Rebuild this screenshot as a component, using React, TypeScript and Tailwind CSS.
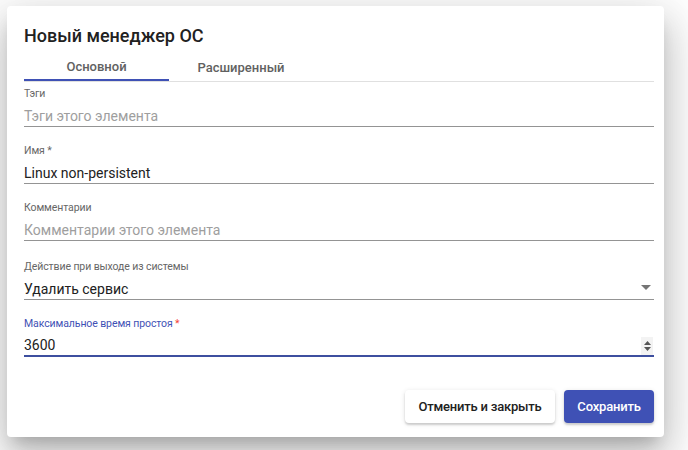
import React from "react";

const font = { fontFamily: "Roboto, 'Noto Sans', sans-serif" };

interface FieldProps {
    label: string;
    required?: boolean;
    value?: string;
    placeholder?: string;
    focused?: boolean;
    suffix?: React.ReactNode;
    className?: string;
}

const Field = ({ label, required, value, placeholder, focused, suffix, className }: FieldProps) => {
    return (
        <div className={`flex flex-col ${className ?? "pt-[17px]"}`}>
            <div
                className={`text-[10.5px] leading-[14px] tracking-[-0.1px] ${
                    focused ? "text-[#3f51b5]" : "text-[#666666]"
                }`}
            >
                {label}
                {required && <span className={focused ? "text-[#f44336]" : ""}> *</span>}
            </div>
            <div
                className={`flex items-end h-[26px] ${
                    focused ? "border-b-2 border-[#3d4f9f]" : "border-b border-[#949494]"
                }`}
            >
                <div
                    className={`flex-1 text-[14px] leading-[20px] ${
                        value ? "text-[#212121]" : "text-[#9e9e9e]"
                    }`}
                >
                    {value ?? placeholder}
                </div>
                {suffix}
            </div>
        </div>
    );
};

const Spinner = () => (
    <div className="flex flex-col items-center justify-center w-[12px] h-[18px] bg-[#f3f3f3] mr-[1px] gap-[2px]">
        <svg width="7" height="4" viewBox="0 0 7 4"><path d="M0 4 L3.5 0 L7 4 Z" fill="#555" /></svg>
        <svg width="7" height="4" viewBox="0 0 7 4"><path d="M0 0 L3.5 4 L7 0 Z" fill="#555" /></svg>
    </div>
);

const Arrow = () => (
    <svg width="10" height="5" viewBox="0 0 10 5" className="mr-[3px] mb-[9px]">
        <path d="M0 0 L5 5 L10 0 Z" fill="#757575" />
    </svg>
);

export default function App() {
    return (
        <div className="w-[688px] h-[450px] bg-white pt-[6px] pl-[7px]" style={font}>
            <div className="w-[657px] h-[431px] bg-white rounded-[4px] shadow-[0_11px_15px_-7px_rgba(0,0,0,0.2),0_24px_38px_3px_rgba(0,0,0,0.14),0_9px_46px_8px_rgba(0,0,0,0.12)] pl-[17px] pr-[10px] pt-[18px] flex flex-col">
                <h2 className="text-[18px] leading-[24px] font-medium text-[#212121]">Новый менеджер ОС</h2>
                <div className="flex mt-[7px] border-b border-[#e0e0e0]">
                    <div className="w-[145px] h-[26px] flex items-center justify-center text-[13px] font-medium text-[#616161] border-b-2 border-[#3f51b5] -mb-px">
                        Основной
                    </div>
                    <div className="w-[144px] h-[26px] flex items-center justify-center text-[13px] font-medium text-[#616161]">
                        Расширенный
                    </div>
                </div>
                <div className="flex flex-col">
                    <Field label="Тэги" placeholder="Тэги этого элемента" className="pt-[5px]" />
                    <Field label="Имя" required value="Linux non-persistent" />
                    <Field label="Комментарии" placeholder="Комментарии этого элемента" />
                    <Field
                        label="Действие при выходе из системы"
                        value="Удалить сервис"
                        suffix={<Arrow />}
                        className="pt-[19px]"
                    />
                    <Field label="Максимальное время простоя" required focused value="3600" suffix={<Spinner />} />
                </div>
                <div className="flex justify-end gap-[9px] mt-[33px]">
                    <button className="h-[33px] w-[150px] rounded-[4px] bg-white text-[13px] tracking-[-0.2px] font-medium text-[#212121] shadow-[0_2px_2px_0_rgba(0,0,0,0.14),0_1px_5px_0_rgba(0,0,0,0.12)]">
                        Отменить и закрыть
                    </button>
                    <button className="h-[33px] w-[90px] rounded-[4px] bg-[#3f51b5] text-[13px] tracking-[-0.2px] font-medium text-white shadow-[0_2px_2px_0_rgba(0,0,0,0.14),0_1px_5px_0_rgba(0,0,0,0.12)]">
                        Сохранить
                    </button>
                </div>
            </div>
        </div>
    );
}
